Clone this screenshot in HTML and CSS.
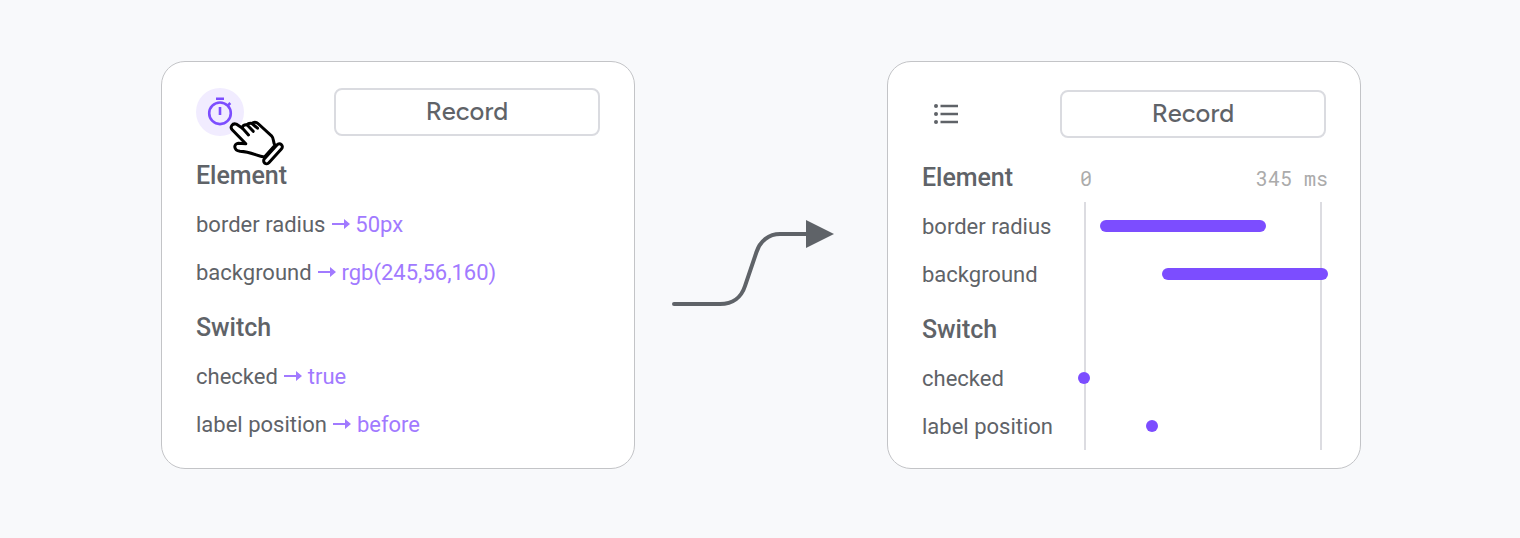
FILE: index.html
```html
<!DOCTYPE html>
<html lang="en">
<head>
<meta charset="utf-8">
<title>Record</title>
<link rel="stylesheet" href="styles.css">
</head>
<body>
<main class="stage">
  <section class="card">
    <header class="head">
      <div class="timer">
        <svg width="48" height="48" viewBox="0 0 48 48" fill="none" stroke="#7c4dff" stroke-width="2.6"><circle cx="24" cy="25.300" r="10.800"/><path d="M20 10.800h8M24 19v8M31.500 17.800l2.800-2.800"/></svg>
        <svg class="hand" width="60" height="52" viewBox="221 115 60 52" fill="#fff" stroke="#000" stroke-width="3" stroke-linecap="round" stroke-linejoin="round">
          <path d="M245.800 143.800L232.200 129.700C229.700 127 232.300 123 236.200 124.100L242.500 128.200C242 126 244.200 124.300 247 124.800C248 123.500 250 123 252 123.500C253.500 121.800 256.300 121.800 258 123.500L271.500 135.800C274.500 139 272.700 142.500 275 145.300L264.500 157C257 156.500 252 151.800 240 151.300C233.500 150.500 233.300 143.800 238.300 143.200Z"/>
          <path d="M242.500 128.200L248.500 135M247 124.800L253.200 131.300M252 123.500L257.500 128.200"/>
          <rect x="260.500" y="150.800" width="25" height="6" rx="3" transform="rotate(-48 273 153.800)"/>
        </svg>
      </div>
      <div class="button">Record</div>
    </header>
    <div class="rows">
      <h2>Element</h2>
      <p>border radius <svg class="arrow" viewBox="0 0 18 12"><path d="M0 5h12V1l6 5-6 5V7H0z"/></svg> <b>50px</b></p>
      <p>background <svg class="arrow" viewBox="0 0 18 12"><path d="M0 5h12V1l6 5-6 5V7H0z"/></svg> <b>rgb(245,56,160)</b></p>
      <h2 class="next">Switch</h2>
      <p>checked <svg class="arrow" viewBox="0 0 18 12"><path d="M0 5h12V1l6 5-6 5V7H0z"/></svg> <b>true</b></p>
      <p>label position <svg class="arrow" viewBox="0 0 18 12"><path d="M0 5h12V1l6 5-6 5V7H0z"/></svg> <b>before</b></p>
    </div>
  </section>
  <svg class="flow" width="168" height="90" viewBox="670 218 168 90"><path d="M674 304H720C733 304 741.500 297 745 286L756.500 252C760 241 769 234 780 234H808" fill="none" stroke="#5f6368" stroke-width="4" stroke-linecap="round"/><path d="M806 220L834 234L806 248Z" fill="#5f6368"/></svg>
  <section class="card card-chart">
    <header class="head">
      <svg width="48" height="48" viewBox="0 0 48 48" fill="#5f6368"><circle cx="14" cy="16" r="2"/><circle cx="14" cy="24" r="2"/><circle cx="14" cy="32" r="2"/><path d="M18.500 14.800H36v2.400H18.500zM18.500 22.800H36v2.400H18.500zM18.500 30.800H36v2.400H18.500z"/></svg>
      <div class="button">Record</div>
    </header>
    <div class="chart">
      <div class="rows">
        <h2>Element</h2>
        <p>border radius</p>
        <p>background</p>
        <h2 class="next">Switch</h2>
        <p>checked</p>
        <p>label position</p>
      </div>
      <div class="timeline">
        <div class="scale"><span>0</span><span>345 ms</span></div>
        <div class="plot">
          <i class="bar" style="left:14px;top:18px;width:166px"></i>
          <i class="bar" style="left:76px;top:66px;width:166px"></i>
          <i class="bar" style="left:-8px;top:170px;width:12px"></i>
          <i class="bar" style="left:60px;top:218px;width:12px"></i>
        </div>
      </div>
    </div>
  </section>
</main>
</body>
</html>
```
FILE: styles.css
```css
* { box-sizing: border-box; }
body {
  margin: 0;
  background: #f8f9fb;
  color: #5f6368;
  font-family: Roboto, sans-serif;
}
.stage {
  height: 538px;
  padding: 61px 159px 0 161px;
  display: flex;
  align-items: flex-start;
  overflow: hidden;
}
.card {
  flex: none;
  width: 474px;
  height: 408px;
  padding: 26px 34px 0;
  background: #fff;
  border: 1px solid #c3c4c7;
  border-radius: 24px;
}
.card-chart { padding-top: 28px; }
.flow { flex: none; margin: 157px 49px 0 35px; }
.head {
  display: flex;
  justify-content: space-between;
  margin-bottom: 16px;
}
.card-chart .head svg { display: block; }
.timer {
  position: relative;
  width: 48px;
  height: 48px;
  border-radius: 50%;
  background: #f1ecff;
}
.timer svg { display: block; }
.timer .hand {
  position: absolute;
  left: 25px;
  top: 27px;
  overflow: visible;
}
.button {
  width: 266px;
  height: 48px;
  border: 2px solid #dadbe0;
  border-radius: 8px;
  font: 500 25.5px/43px "Google Sans", Figtree, Inter, sans-serif;
  text-align: center;
}
.rows h2, .rows p {
  margin: 0;
  height: 48px;
  line-height: 48px;
  white-space: nowrap;
}
.rows h2 { font-size: 25px; font-weight: 500; letter-spacing: -0.05px; }
.rows p { font-size: 22px; font-weight: 400; line-height: 50px; }
.rows .next { margin-top: 8px; }
.rows b { font-weight: 400; color: #a17aff; }
.arrow { width: 18px; height: 12px; margin: 0 0.3px 0 0.7px; fill: #a17aff; vertical-align: 2px; }
.chart { display: grid; grid-template-columns: 162px 244px; }
.scale {
  height: 48px;
  margin-left: -4px;
  display: flex;
  justify-content: space-between;
  line-height: 48px;
  font-family: "Roboto Mono", "DejaVu Sans Mono", monospace;
  font-size: 20px;
  color: #ababab;
}
.plot {
  position: relative;
  width: 238px;
  height: 248px;
  border: solid #dcdce1;
  border-width: 0 2px;
}
.bar {
  position: absolute;
  height: 12px;
  border-radius: 6px;
  background: #7c4dff;
}
```
